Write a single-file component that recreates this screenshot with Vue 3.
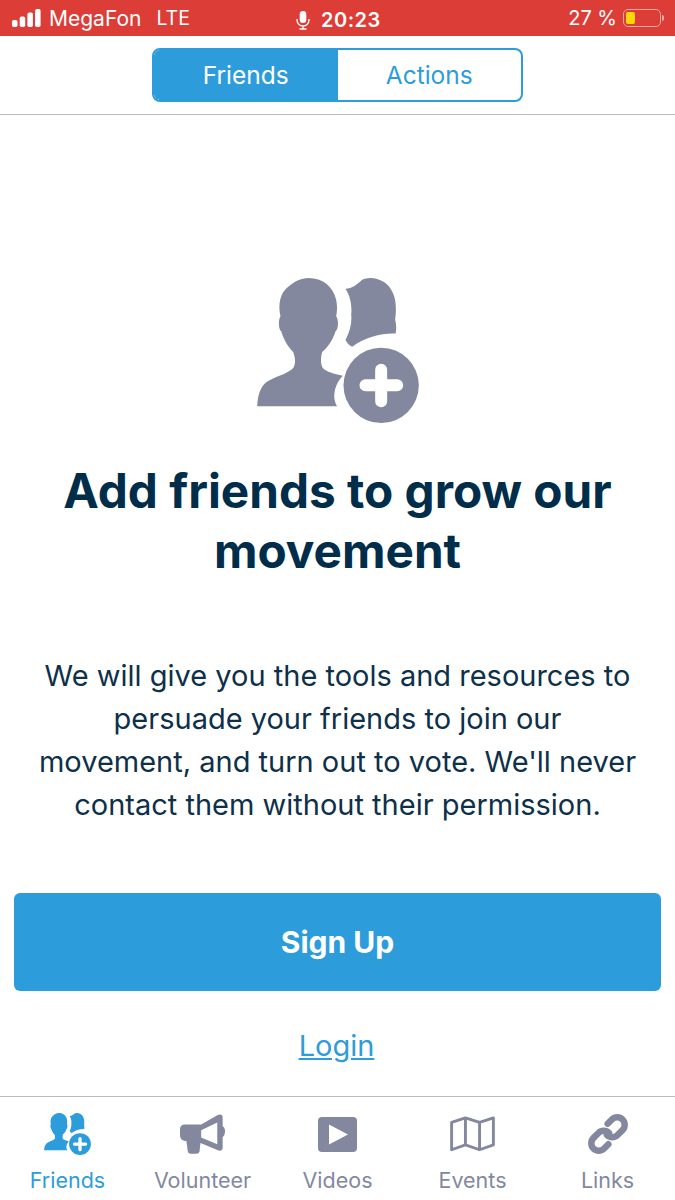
<script setup>
const head1 =
  "M50 425 C52 385 62 358 90 345 C115 333 145 325 158 310 C166 298 165 280 158 262 C140 245 128 220 122 200 C114 195 113 165 120 155 C112 120 118 85 145 65 C160 52 180 40 205 40 C245 40 278 65 287 105 C291 125 290 140 287 155 C295 165 294 195 285 200 C278 225 262 248 245 262 C240 280 240 298 247 310 C258 322 280 327 307 333 C285 355 272 395 290 425 Z";
const head2 =
  "M315 72 C335 72 350 58 365 45 C395 32 435 45 452 75 C468 100 468 135 464 165 C468 180 468 195 465 207 C425 205 375 218 335 246 C325 242 320 235 315 226 C328 200 335 175 332 150 C335 125 330 95 315 72 Z";
</script>

<template>
  <div class="page">
    <div class="status">
      <div class="status-left">
        <svg class="signal" width="29" height="18" viewBox="0 0 29 18">
          <rect x="0" y="11" width="5.5" height="7" rx="1.8" />
          <rect x="7.7" y="7.5" width="5.5" height="10.5" rx="1.8" />
          <rect x="15.4" y="3.5" width="5.5" height="14.5" rx="1.8" />
          <rect x="23.1" y="0" width="5.5" height="18" rx="1.8" />
        </svg>
        <span class="carrier">MegaFon</span>
        <span class="net">LTE</span>
      </div>
      <div class="status-mid">
        <svg width="14" height="19" viewBox="0 0 14 19" fill="none">
          <rect x="3.7" y="0" width="6.6" height="12" rx="3.3" fill="#fff" />
          <path d="M1 8 V9 A6 6 0 0 0 13 9 V8 M7 15 V18 M3.5 18 H10.5" stroke="#fff" stroke-width="1.3" />
        </svg>
        <span class="time">20:23</span>
      </div>
      <div class="status-right">
        <span class="percent">27 %</span>
        <div class="battery"><div class="battery-fill"></div></div>
        <div class="battery-nub"></div>
      </div>
    </div>

    <div class="header">
      <div class="segment">
        <div class="seg seg-on">Friends</div>
        <div class="seg">Actions</div>
      </div>
    </div>

    <main class="content">
      <svg class="hero" width="162" height="145" viewBox="50 40 485 435">
        <path :d="head1" fill="#83889f" />
        <path :d="head2" fill="#83889f" />
        <circle cx="422" cy="362" r="113" fill="#83889f" />
        <path d="M375 362 H470 M422 315 V410" stroke="#fff" stroke-width="36" stroke-linecap="round" />
      </svg>
      <h1>Add friends to grow our movement</h1>
      <p>We will give you the tools and resources to persuade your friends to join our movement, and turn out to vote. We'll never contact them without their permission.</p>
      <button class="signup">Sign Up</button>
      <a class="login">Login</a>
    </main>

    <nav class="tabs">
      <div class="tab tab-on">
        <div class="tab-icon">
          <svg width="47" height="42" viewBox="50 40 485 435">
            <path :d="head1" fill="#2d9cdb" />
            <path :d="head2" fill="#2d9cdb" />
            <circle cx="422" cy="362" r="113" fill="#2d9cdb" />
            <path d="M365 362 H480 M422 305 V420" stroke="#fff" stroke-width="34" stroke-linecap="round" />
          </svg>
        </div>
        <span>Friends</span>
      </div>
      <div class="tab">
        <div class="tab-icon">
          <svg width="45" height="40" viewBox="537 72 134 119">
            <path fill="#83889f" fill-rule="evenodd" d="M552 103 H600 L648 76 Q664 68 664 84 V108 Q672 114 671 125 Q671 136 664 141 V170 Q664 186 648 179 L598 158 L595 184 Q594 190 585 190 H569 Q561 190 560 182 L556 152 H552 Q537 150 537 135 V118 Q537 103 552 103 Z M600 120 V142 L648 162 V97 Z" />
          </svg>
        </div>
        <span>Volunteer</span>
      </div>
      <div class="tab">
        <div class="tab-icon">
          <svg width="39" height="35" viewBox="0 0 39 35">
            <rect x="0" y="0" width="39" height="35" rx="4" fill="#83889f" />
            <path d="M11 7.5 L30 17.5 L11 27.5 Z" fill="#fff" />
          </svg>
        </div>
        <span>Videos</span>
      </div>
      <div class="tab">
        <div class="tab-icon">
          <svg width="45" height="36" viewBox="340 77 140 108" fill="none">
            <path d="M345 95 L388 81 L432 95 L475 81 V165 L432 180 L388 165 L345 180 Z M388 81 V165 M432 95 V180" stroke="#83889f" stroke-width="9" stroke-linejoin="round" />
          </svg>
        </div>
        <span>Events</span>
      </div>
      <div class="tab">
        <div class="tab-icon">
          <svg width="40" height="40" viewBox="0 0 40 40" fill="none">
            <g transform="rotate(-45 20 20)" stroke="#83889f" stroke-width="6.5" stroke-linecap="round">
              <path d="M13 27.5 H7 A7.5 7.5 0 0 1 7 12.5 H14 A7.5 7.5 0 0 1 21.5 20" />
              <path d="M27 12.5 H33 A7.5 7.5 0 0 1 33 27.5 H26 A7.5 7.5 0 0 1 18.5 20" />
            </g>
          </svg>
        </div>
        <span>Links</span>
      </div>
    </nav>
  </div>
</template>

<style>
body {
  margin: 0;
}
</style>

<style scoped>
.page {
  width: 675px;
  height: 1200px;
  display: flex;
  flex-direction: column;
  font-family: Inter, "Noto Sans", sans-serif;
  background: #fff;
  overflow: hidden;
}

.status {
  height: 36px;
  flex: none;
  background: #dc3d36;
  color: #fff;
  font-size: 20px;
  display: flex;
  align-items: center;
  justify-content: space-between;
  padding: 0 11px 0 12px;
  box-sizing: border-box;
  position: relative;
}

.status-left,
.status-right,
.status-mid {
  display: flex;
  align-items: center;
}

.signal {
  fill: #fff;
  margin-right: 8px;
}

.carrier {
  font-size: 21px;
  margin-right: 15px;
}

.net {
  font-size: 19.5px;
}

.status-mid {
  position: absolute;
  left: 296px;
  top: 8px;
  gap: 11px;
}

.time {
  font-weight: 600;
  letter-spacing: 0.5px;
}

.percent {
  margin-right: 6px;
}

.battery {
  width: 38px;
  height: 18px;
  border: 1px solid #f0a8a2;
  border-radius: 5px;
  box-sizing: border-box;
  padding: 2px;
}

.battery-fill {
  width: 9px;
  height: 100%;
  background: #ffd60a;
  border-radius: 2px;
}

.battery-nub {
  width: 2px;
  height: 6px;
  margin-left: 1px;
  background: #f0a8a2;
  border-radius: 0 2px 2px 0;
}

.header {
  height: 79px;
  flex: none;
  border-bottom: 1px solid #bbb;
  box-sizing: border-box;
  display: flex;
  justify-content: center;
  padding-top: 12px;
}

.segment {
  width: 371px;
  height: 54px;
  display: flex;
  border: 2px solid #2d9cdb;
  border-radius: 8px;
  box-sizing: border-box;
  overflow: hidden;
}

.seg {
  flex: 1;
  display: flex;
  align-items: center;
  justify-content: center;
  font-size: 24.5px;
  color: #2d9cdb;
}

.seg-on {
  background: #2d9cdb;
  color: #fff;
}

.content {
  flex: 1;
  display: flex;
  flex-direction: column;
  align-items: center;
  padding: 163px 14px 0;
  box-sizing: border-box;
  color: #002d4a;
}

h1 {
  margin: 38px 0 0;
  width: 600px;
  font-size: 47.7px;
  line-height: 60px;
  font-weight: 700;
  text-align: center;
}

p {
  margin: 73px 0 0;
  width: 603px;
  font-size: 29px;
  line-height: 43px;
  text-align: center;
  color: #0e3049;
}

.signup {
  margin-top: 67px;
  width: 100%;
  height: 98px;
  flex: none;
  border: none;
  border-radius: 6px;
  background: #2d9cdb;
  color: #fff;
  font-family: inherit;
  font-size: 30px;
  font-weight: 700;
}

.login {
  margin: 37px 2px 0 0;
  font-size: 29px;
  color: #2d9cdb;
  text-decoration: underline;
}

.tabs {
  height: 104px;
  flex: none;
  border-top: 1px solid #bbb;
  box-sizing: border-box;
  display: flex;
}

.tab {
  flex: 1;
  display: flex;
  flex-direction: column;
  align-items: center;
  font-size: 21.5px;
  color: #83889f;
  padding-top: 16px;
}

.tab-on {
  color: #2d9cdb;
}

.tab-icon {
  height: 42px;
  display: flex;
  align-items: center;
  justify-content: center;
  margin-bottom: 12px;
}
</style>
